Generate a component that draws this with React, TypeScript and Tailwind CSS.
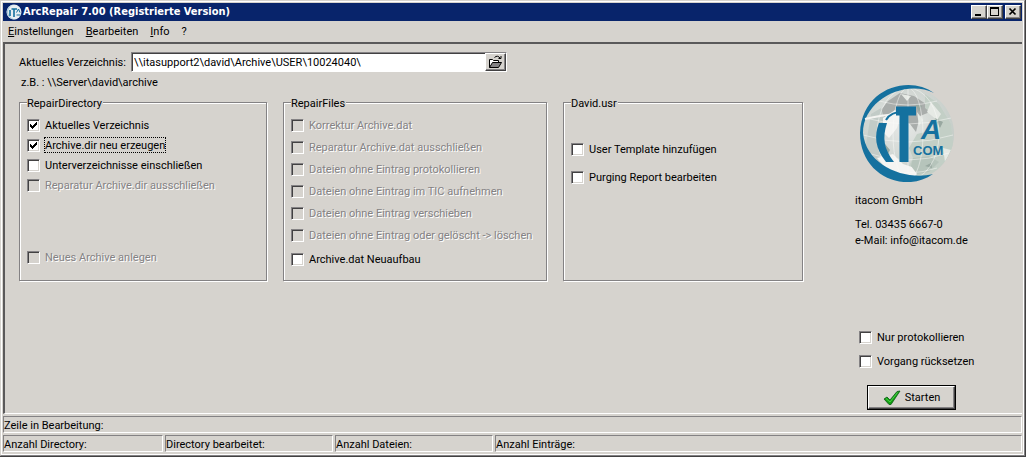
import { useState, type ReactNode } from "react";

const raised =
  "border border-t-white border-l-white border-r-[#424142] border-b-[#424142] shadow-[inset_-1px_-1px_0_#848284]";

function Check({
  label,
  checked = false,
  disabled = false,
  focused = false,
  className = "h-5",
}: {
  label: string;
  checked?: boolean;
  disabled?: boolean;
  focused?: boolean;
  className?: string;
}) {
  const [on, setOn] = useState(checked);
  return (
    <label className={`flex items-center gap-1 ${className}`}>
      <span className="relative flex">
        <input
          type="checkbox"
          checked={on}
          disabled={disabled}
          onChange={() => setOn(!on)}
          className="size-[13px] appearance-none border border-t-[#848284] border-l-[#848284] border-r-white border-b-white bg-white shadow-[inset_1px_1px_0_#424142,inset_-1px_-1px_0_#d6d3ce] outline-none disabled:bg-[#d6d3ce]"
        />
        {on && (
          <svg
            viewBox="0 0 13 13"
            className="pointer-events-none absolute inset-0 size-[13px]"
            shapeRendering="crispEdges"
          >
            <path
              d="M3 5h1v3h-1zM4 6h1v3h-1zM5 7h1v3h-1zM6 6h1v3h-1zM7 5h1v3h-1zM8 4h1v3h-1zM9 3h1v3h-1z"
              fill="#000"
            />
          </svg>
        )}
      </span>
      <span
        className={`border border-dotted pt-0.5 leading-[12px] whitespace-nowrap ${
          focused ? "border-black" : "border-transparent"
        } ${disabled ? "text-[#848284] [text-shadow:1px_1px_0_#fff]" : ""}`}
      >
        {label}
      </span>
    </label>
  );
}

function Group({ title, className, children }: { title: string; className: string; children: ReactNode }) {
  return (
    <fieldset
      className={`flex min-w-0 flex-col border border-[#848284] px-[7px] shadow-[inset_1px_1px_0_#fff,1px_1px_0_#fff] ${className}`}
    >
      <legend className="bg-[#d6d3ce] pt-0.5 pr-px leading-[11px]">{title}</legend>
      {children}
    </fieldset>
  );
}

function Logo() {
  return (
    <svg viewBox="0 0 100 100" className="size-[100px]" role="img" aria-label="itacom">
      <defs>
        <radialGradient id="globe" cx="45%" cy="40%" r="60%">
          <stop offset="0" stopColor="#e6e8e6" />
          <stop offset="0.7" stopColor="#cfd5d1" />
          <stop offset="1" stopColor="#c3cbc6" />
        </radialGradient>
        <clipPath id="disc">
          <circle cx="53" cy="52" r="46" />
        </clipPath>
      </defs>
      <circle cx="53" cy="52" r="46" fill="url(#globe)" />
      <g clipPath="url(#disc)">
        <path d="M33 19l12-8 14 3 12 8 4 8-10 4-4 16-6-8-14-6-12 2-6-6z" fill="#a9adab" />
        <path d="M70 12l14 10 12 20 2 22-8 20-14 10-16 2-8-8 6-12-4-10 8-14 16-4 2-14-10-8z" fill="#c3cfc6" />
        <path d="M16 32l10-6 4 12-8 14 6 18-6 10-12-12z" fill="#c2cbc7" />
        <path d="M28 36l12-8 6 6-4 12-8 10-6-6zM22 76l16-4 10 10 18 6-6 6-24-2z" fill="#f4f4f2" />
        <path d="M58 76l16-2 10 6-10 10-12 2-6-8z" fill="#b6c4bb" />
        <path d="M76 20l10 12-4 6-10-8zM46 12l10 2-4 5zM88 66l8 2-6 12zM62 30l6 8-4 6z" fill="#e6eae5" />
        <path d="M60 22l7 2-3 6zM80 36l8 4-3 6zM70 84l6-3 1 5zM30 62l5 6-3 6z" fill="#98a8a0" />
        <g fill="none" stroke="#fafaf8" strokeWidth="0.500">
          <ellipse cx="53" cy="52" rx="15" ry="46" />
          <ellipse cx="53" cy="52" rx="31" ry="46" />
          <path d="M53 6v92M10 36q43 12 86 0M8 53q45 14 90 0M12 71q41 14 82 0M24 19q29 8 58 0M22 86q30 10 60 0" />
        </g>
      </g>
      <path
        d="M79 11C55-7 7 5 5 51c0 43 45 61 73 41C51 99 11 84 8 51 8 18 50-3 79 11z"
        fill="#15719f"
      />
      <path d="M10 37q16-4 34-5" stroke="#f4f4f2" strokeWidth="2" fill="none" />
      <path d="M24 41h8c-5 15-3 26 7 39h-8C20 66 19 54 24 41z" fill="#15719f" />
      <path d="M31 38q4-8 19-9" stroke="#15719f" strokeWidth="2" fill="none" />
      <path d="M41 29h20M49 28v52" stroke="#15719f" strokeWidth="9" fill="none" />
      <g fill="#15719f" fontFamily="Liberation Sans, sans-serif" fontWeight="700">
        <text x="66" y="57" fontSize="28" fontStyle="italic">A</text>
        <text x="58" y="73" fontSize="13">COM</text>
      </g>
    </svg>
  );
}

const statusCell =
  "border border-t-[#848284] border-l-[#848284] border-r-white border-b-white pt-0.5 leading-[13px] whitespace-nowrap";

export default function App() {
  const [path, setPath] = useState("\\\\itasupport2\\david\\Archive\\USER\\10024040\\");
  return (
    <div className="flex min-h-screen flex-col border-r border-b border-[#424142] bg-[#d6d3ce] font-[Roboto,'Liberation_Sans',sans-serif] text-[11px] text-black">
      <div className="flex flex-1 flex-col border border-t-[#d6d3ce] border-l-[#d6d3ce] border-r-[#848284] border-b-[#848284]">
        <div className="flex flex-1 flex-col border border-white p-px">
          <header className="flex h-[18px] items-center bg-[#08246b] pr-px pl-[3px] text-white">
            <svg viewBox="0 0 16 16" className="mr-[1px] size-4" aria-hidden="true">
              <circle cx="8" cy="8" r="7.500" fill="#e8eef2" />
              <path d="M8 .5A7.500 7.500 0 1 0 11 15 7 7 0 0 1 8 .5z" fill="#a9cbdc" />
              <path d="M4 6v6M5.500 5h5.500M8 5v8" stroke="#15719f" strokeWidth="1.600" />
              <path d="M10.500 8.500L12.500 5l1.500 3.500M10.500 11h4" stroke="#15719f" fill="none" />
            </svg>
            <h1 className="flex-1 font-['DejaVu_Sans_Condensed','DejaVu_Sans',sans-serif] text-[11px] font-bold">
              ArcRepair 7.00 (Registrierte Version)
            </h1>
            <button aria-label="Minimieren" className={`h-[14px] w-4 bg-[#d6d3ce] ${raised}`}>
              <svg viewBox="0 0 14 12" className="h-3 w-[14px]" shapeRendering="crispEdges">
                <path d="M3 8h6v2H3z" />
              </svg>
            </button>
            <button aria-label="Maximieren" className={`mr-0.5 h-[14px] w-4 bg-[#d6d3ce] ${raised}`}>
              <svg viewBox="0 0 14 12" className="h-3 w-[14px]" shapeRendering="crispEdges">
                <path d="M2 1h9v9H2zM3 3v6h7V3z" fillRule="evenodd" />
              </svg>
            </button>
            <button aria-label="Schließen" className={`h-[14px] w-4 bg-[#d6d3ce] ${raised}`}>
              <svg viewBox="0 0 14 12" className="h-3 w-[14px]">
                <path d="M3.500 2.500l6 6M9.500 2.500l-6 6" stroke="#000" strokeWidth="1.700" />
              </svg>
            </button>
          </header>
          <nav className="flex h-[21px] items-center gap-3 pt-0.5 pl-[5px]">
            <button><u>E</u>instellungen</button>
            <button><u>B</u>earbeiten</button>
            <button><u>I</u>nfo</button>
            <button>?</button>
          </nav>
          <main className="flex flex-1 border-t-2 border-l-2 border-b border-t-[#5a595a] border-l-[#5a595a] border-b-white pl-[14px]">
            <form className="min-w-0 flex-1 pt-2" onSubmit={(e) => e.preventDefault()}>
              <div className="flex items-center">
                <label htmlFor="path" className="w-28 pt-0.5 whitespace-nowrap">
                  Aktuelles Verzeichnis:
                </label>
                <div className="flex h-5 w-[376px] border border-t-[#848284] border-l-[#848284] border-r-white border-b-white bg-white shadow-[inset_1px_1px_0_#424142]">
                  <input
                    id="path"
                    value={path}
                    onChange={(e) => setPath(e.target.value)}
                    className="min-w-0 flex-1 bg-transparent pt-0.5 pl-0.5 outline-none"
                  />
                  <button type="button" aria-label="Verzeichnis öffnen" className={`h-[18px] w-[21px] bg-[#d6d3ce] ${raised}`}>
                    <svg viewBox="0 0 19 16" className="h-4 w-[19px]" fill="none" stroke="#000">
                      <path d="M3.500 13.500v-8h3l1 1h5v2" fill="#fff" />
                      <path d="M3.500 13.500l3-5h9l-3 5z" fill="#848284" />
                      <path d="M8.500 3.500q3-3 6 1M12.500 4.500h2.500v-2.500" />
                    </svg>
                  </button>
                </div>
              </div>
              <p className="pt-0.5 pl-0.5 leading-[18px]">z.B. : \\Server\david\archive</p>
              <div className="mt-1 grid grid-cols-[248fr_264fr_240fr] gap-4">
                <Group title="RepairDirectory" className="pt-1.5 pb-[13px]">
                  <Check label="Aktuelles Verzeichnis" checked />
                  <Check label="Archive.dir neu erzeugen" checked focused />
                  <Check label="Unterverzeichnisse einschließen" />
                  <Check label="Reparatur Archive.dir ausschließen" disabled />
                  <Check label="Neues Archive anlegen" disabled className="mt-auto h-5" />
                </Group>
                <Group title="RepairFiles" className="pt-[5px] pb-[10px]">
                  <Check label="Korrektur Archive.dat" disabled className="h-[22px]" />
                  <Check label="Reparatur Archive.dat ausschließen" disabled className="h-[22px]" />
                  <Check label="Dateien ohne Eintrag protokollieren" disabled className="h-[22px]" />
                  <Check label="Dateien ohne Eintrag im TIC aufnehmen" disabled className="h-[22px]" />
                  <Check label="Dateien ohne Eintrag verschieben" disabled className="h-[22px]" />
                  <Check label="Dateien ohne Eintrag oder gelöscht -> löschen" disabled className="h-[22px]" />
                  <Check label="Archive.dat Neuaufbau" className="mt-0.5 h-[22px]" />
                </Group>
                <Group title="David.usr" className="pt-[26px]">
                  <Check label="User Template hinzufügen" className="h-7" />
                  <Check label="Purging Report bearbeiten" className="h-7" />
                </Group>
              </div>
            </form>
            <aside className="ml-[52px] flex w-[167px] flex-col pt-[38px] pb-[3px]">
              <Logo />
              <p className="mt-[11px] leading-4">itacom GmbH</p>
              <p className="mt-2 leading-4">Tel. 03435 6667-0</p>
              <p className="leading-4">e-Mail: info@itacom.de</p>
              <div className="mt-auto pl-1">
                <Check label="Nur protokollieren" className="h-6" />
                <Check label="Vorgang rücksetzen" className="h-6" />
              </div>
              <button className="mt-3 ml-3 flex h-[25px] w-[89px] border border-black">
                <span className={`flex h-full flex-1 items-center justify-center gap-1 pt-px ${raised}`}>
                  <svg viewBox="0 0 18 16" className="h-4 w-[18px]" aria-hidden="true">
                    <path d="M1 9l3-2 3 3 7-8.500L17 1 8 14.500H6z" fill="#12a012" stroke="#0a5a14" strokeWidth="0.800" />
                    <path d="M3 8.500l4 3.500L14.500 2.500" fill="none" stroke="#4bd04b" strokeWidth="1" />
                  </svg>
                  Starten
                </span>
              </button>
            </aside>
          </main>
          <footer className="flex flex-col gap-0.5 pt-0.5 pb-px">
            <div className={statusCell}>Zeile in Bearbeitung:</div>
            <div className="flex gap-0.5">
              <div className={`w-40 ${statusCell}`}>Anzahl Directory:</div>
              <div className={`w-[168px] ${statusCell}`}>Directory bearbeitet:</div>
              <div className={`w-[158px] ${statusCell}`}>Anzahl Dateien:</div>
              <div className={`flex-1 ${statusCell}`}>Anzahl Einträge:</div>
            </div>
          </footer>
        </div>
      </div>
    </div>
  );
}
